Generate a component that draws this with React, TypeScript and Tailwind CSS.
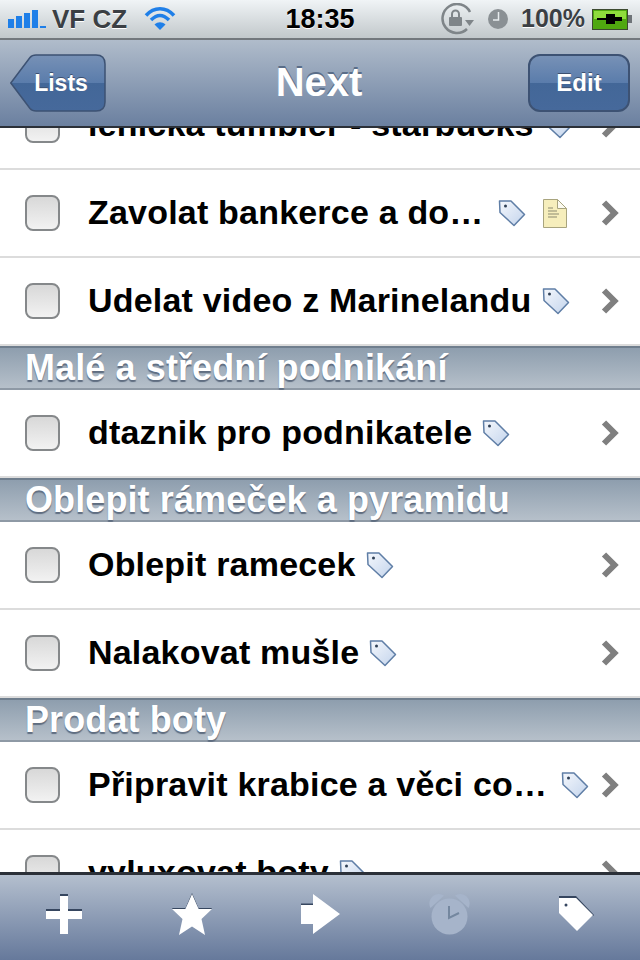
const font = { fontFamily: '"Liberation Sans", Arial, sans-serif' };

type Item = { title: string; tag?: boolean; note?: boolean };
type Group = { name?: string; items: Item[] };

const groups: Group[] = [
  {
    items: [
      { title: "lenicka tumbler - starbucks", tag: true },
      { title: "Zavolat bankerce a do…", tag: true, note: true },
      { title: "Udelat video z Marinelandu", tag: true },
    ],
  },
  { name: "Malé a střední podnikání", items: [{ title: "dtaznik pro podnikatele", tag: true }] },
  {
    name: "Oblepit rámeček a pyramidu",
    items: [
      { title: "Oblepit ramecek", tag: true },
      { title: "Nalakovat mušle", tag: true },
    ],
  },
  {
    name: "Prodat boty",
    items: [
      { title: "Připravit krabice a věci co…", tag: true },
      { title: "vyluxovat boty", tag: true },
    ],
  },
];

function TagIcon() {
  return (
    <svg width="28" height="28" viewBox="0 0 28 28" className="shrink-0">
      <defs>
        <linearGradient id="tagFill" x1="0" y1="0" x2="1" y2="1">
          <stop offset="0" stopColor="#f4f7fc" />
          <stop offset="1" stopColor="#c3d4ec" />
        </linearGradient>
      </defs>
      <path d="M1.5 2h11.5l13.5 13.5-10.5 11L2 13.5z" fill="url(#tagFill)" stroke="#5f7ea6" strokeWidth="1.5" strokeLinejoin="round" />
      <circle cx="7.500" cy="7" r="1.500" fill="#2f3f55" />
    </svg>
  );
}

function NoteIcon() {
  return (
    <svg width="24" height="29" viewBox="0 0 24 29" className="shrink-0 ml-[17px]">
      <path d="M.5.5h14l9 9v19H.5z" fill="#f6eebc" stroke="#a8a47e" />
      <path d="M14.5.5v9h9z" fill="#fbfaf0" stroke="#a8a47e" />
      <path d="M5 9h5M5 12h9M5 15h11M5 18h9" stroke="#8b8a70" strokeWidth="1" />
    </svg>
  );
}

function Chevron() {
  return (
    <svg width="19" height="28" viewBox="0 0 19 28">
      <path d="M3 3.500l10.500 10.500L3 24.500" fill="none" stroke="#7f7f7f" strokeWidth="6" />
    </svg>
  );
}

function Row({ item }: { item: Item }) {
  const cut = item.title.endsWith("…");
  return (
    <div className="h-[88px] shrink-0 flex items-center pl-[25px] pr-[20px] border-b-2 border-[#dcdcdc] bg-white">
      <div className="w-[35px] h-[36px] shrink-0 rounded-[8px] border-2 border-[#85888a] bg-gradient-to-b from-[#d8d8d8] to-[#f2f2f2]" />
      <span className={cut ? "ml-[28px] -mt-[1px] pr-[4px] text-[34px] font-bold tracking-[0.2px] text-black whitespace-nowrap" : "ml-[28px] -mt-[1px] text-[34px] font-bold tracking-[0.2px] text-black whitespace-nowrap"}>
        {item.title}
      </span>
      {item.tag && (
        <span className="ml-[10px] flex items-center">
          <TagIcon />
        </span>
      )}
      {item.note && <NoteIcon />}
      <span className="ml-auto flex">
        <Chevron />
      </span>
    </div>
  );
}

function Section({ name }: { name: string }) {
  return (
    <div className="h-[44px] shrink-0 flex items-center pl-[25px] border-t-2 border-b-2 border-t-[#6f7e8d] border-b-[#8e99a5] bg-gradient-to-b from-[#8e9eae] to-[#b6c0ca]">
      <span className="text-[36px] font-bold tracking-[0.1px] text-white [text-shadow:0_2px_1px_#5f6d80]">{name}</span>
    </div>
  );
}

function StatusBar() {
  return (
    <div className="h-[40px] shrink-0 relative flex items-center pl-[8px] pr-[7px] border-b-2 border-[#73787d] bg-gradient-to-b from-[#f0f4f6] to-[#c2c8cb]">
      <svg width="39" height="20" viewBox="0 0 39 20" className="shrink-0">
        <rect x="0" y="10" width="6" height="9" fill="#1f7fe8" />
        <rect x="8" y="7" width="6" height="12" fill="#1f7fe8" />
        <rect x="16" y="4" width="6" height="15" fill="#1f7fe8" />
        <rect x="24" y="1" width="6" height="18" fill="#1f7fe8" />
        <rect x="32" y="17" width="6" height="2" fill="#1f7fe8" />
      </svg>
      <span className="ml-[5px] text-[26px] font-bold text-[#3b3f44] [text-shadow:0_1px_0_#ffffff]">VF CZ</span>
      <svg width="32" height="24" viewBox="0 0 32 24" className="ml-[17px] shrink-0">
        <path d="M2 8.500C10-.5 22-.5 30 8.500" fill="none" stroke="#1f7fe8" strokeWidth="3.500" />
        <path d="M7 13c6-6 12-6 18 0" fill="none" stroke="#1f7fe8" strokeWidth="3.500" />
        <path d="M16 23l-5.500-5.500c3.500-3 7.500-3 11 0z" fill="#1f7fe8" />
      </svg>
      <span className="absolute left-0 right-0 text-center text-[27px] font-bold text-black [text-shadow:0_1px_0_#ffffff]">18:35</span>
      <div className="ml-auto flex items-center">
        <svg width="36" height="32" viewBox="0 0 36 32" className="shrink-0">
          <path d="M31 9A14.500 14.500 0 1 0 28 26" fill="none" stroke="#7f8589" strokeWidth="2.500" />
          <path d="M26 17l9 0-4.500 6z" fill="#7f8589" />
          <rect x="10" y="14" width="13" height="9" rx="1" fill="#7f8589" />
          <path d="M13 14V11a3.500 3.500 0 0 1 7 0v3" fill="none" stroke="#7f8589" strokeWidth="2" />
        </svg>
        <svg width="20" height="20" viewBox="0 0 20 20" className="ml-[13px] shrink-0">
          <circle cx="10" cy="10" r="10" fill="#8a9094" />
          <path d="M10.500 3v8H5" fill="none" stroke="#e8ecee" strokeWidth="1.500" />
        </svg>
        <span className="ml-[13px] text-[25px] font-bold text-[#3b3f44] [text-shadow:0_1px_0_#ffffff]">100%</span>
        <svg width="41" height="21" viewBox="0 0 41 21" className="ml-[7px] shrink-0">
          <rect x="0.500" y="0.500" width="35" height="20" fill="#4fa80f" stroke="#3c4a30" />
          <rect x="2" y="2" width="32" height="8" fill="#8fdc3c" />
          <rect x="36" y="6" width="4" height="8" fill="#6e7378" />
          <path d="M5 9h9V5h9v3h7v4h-7v3h-9v-4H5z" fill="#000000" />
        </svg>
      </div>
    </div>
  );
}

function NavBar() {
  return (
    <div className="h-[88px] shrink-0 relative flex items-center justify-between pl-[10px] pr-[10px] border-b-2 border-[#2b3038] bg-gradient-to-b from-[#b0bccb] to-[#6b80a0]">
      <div className="relative w-[96px] h-[58px] flex items-center justify-center pl-[6px]">
        <svg width="96" height="58" viewBox="0 0 96 58" className="absolute inset-0">
          <defs>
            <linearGradient id="backFill" x1="0" y1="0" x2="0" y2="1">
              <stop offset="0" stopColor="#7791b6" />
              <stop offset="0.5" stopColor="#5a7cab" />
              <stop offset="0.5" stopColor="#436798" />
              <stop offset="1" stopColor="#46699b" />
            </linearGradient>
          </defs>
          <path d="M.8 29L20 3.500Q22 1 26 1H86q9 0 9 9V48q0 9-9 9H26q-4 0-6-2.500z" fill="url(#backFill)" stroke="#3d5273" strokeWidth="1.500" />
        </svg>
        <span className="relative text-[23px] font-bold text-white [text-shadow:0_-1px_0_#3c5070]">Lists</span>
      </div>
      <span className="absolute left-0 right-0 -mt-[3px] pr-[2px] text-center text-[40px] font-bold text-white [text-shadow:0_-2px_0_#5a6d88] pointer-events-none">Next</span>
      <div className="w-[102px] h-[58px] flex items-center justify-center rounded-[12px] border-2 border-[#3d5273] bg-[linear-gradient(to_bottom,#7791b6,#5a7cab_50%,#436798_50%,#46699b)]">
        <span className="text-[24px] font-bold text-white [text-shadow:0_-1px_0_#3c5070]">Edit</span>
      </div>
    </div>
  );
}

function Toolbar() {
  return (
    <div className="h-[88px] shrink-0 flex items-center justify-between pl-[46px] pr-[46px] pb-[8px] border-t-[3px] border-[#2b3038] bg-gradient-to-b from-[#b4bfce] to-[#66799b]">
      <svg width="36" height="40" viewBox="0 0 36 40">
        <path d="M14 0h8v2h-8zM0 15h14v2H0zM22 15h14v2H22z" fill="#36465f" />
        <path d="M14 2h8v15h14v8H22v15h-8V25H0v-8h14z" fill="#ffffff" />
      </svg>
      <svg width="40" height="42" viewBox="0 0 40 42" className="ml-[1px]">
        <path d="M0 15h13.500L20 0l6.500 15H40l-1 1.500H27L20 3 13 16.500H1z" fill="#36465f" />
        <path d="M20 1l6.500 15H40L29.500 26 33 42 20 33.500 7 42l3.500-16L0 16h13.500z" fill="#ffffff" />
      </svg>
      <svg width="39" height="40" viewBox="0 0 39 40">
        <path d="M12 0l27 20-27 20V30H0V11h12z" fill="#ffffff" />
        <path d="M0 9.500h12v1.500H0z" fill="#36465f" />
      </svg>
      <svg width="41" height="42" viewBox="0 0 41 42">
        <circle cx="20.500" cy="23.500" r="18" fill="#a6b4ca" />
        <path d="M1.500 15a9.500 9.500 0 0 1 13.500-12.500zM39.500 15a9.500 9.500 0 0 0-13.500-12.500z" fill="#a6b4ca" />
        <path d="M20 13v12l10-5" fill="none" stroke="#74879f" strokeWidth="2" />
      </svg>
      <svg width="35" height="37" viewBox="0 0 35 37">
        <path d="M0 1h17l18 19-1 1-17-18H0z" fill="#36465f" />
        <path d="M0 3h17l17 17-16 16L0 18z" fill="#ffffff" />
        <circle cx="7" cy="10" r="1.500" fill="#36465f" />
      </svg>
    </div>
  );
}

export default function App() {
  return (
    <div className="w-[640px] h-[960px] flex flex-col overflow-hidden bg-white" style={font}>
      <StatusBar />
      <NavBar />
      <div className="flex-1 min-h-0 overflow-hidden">
        <div className="flex flex-col -mt-[46px]">
          {groups.map((group, idx) => (
            <div key={idx} className="flex flex-col">
              {group.name && <Section name={group.name} />}
              {group.items.map((item) => (
                <Row key={item.title} item={item} />
              ))}
            </div>
          ))}
        </div>
      </div>
      <Toolbar />
    </div>
  );
}
